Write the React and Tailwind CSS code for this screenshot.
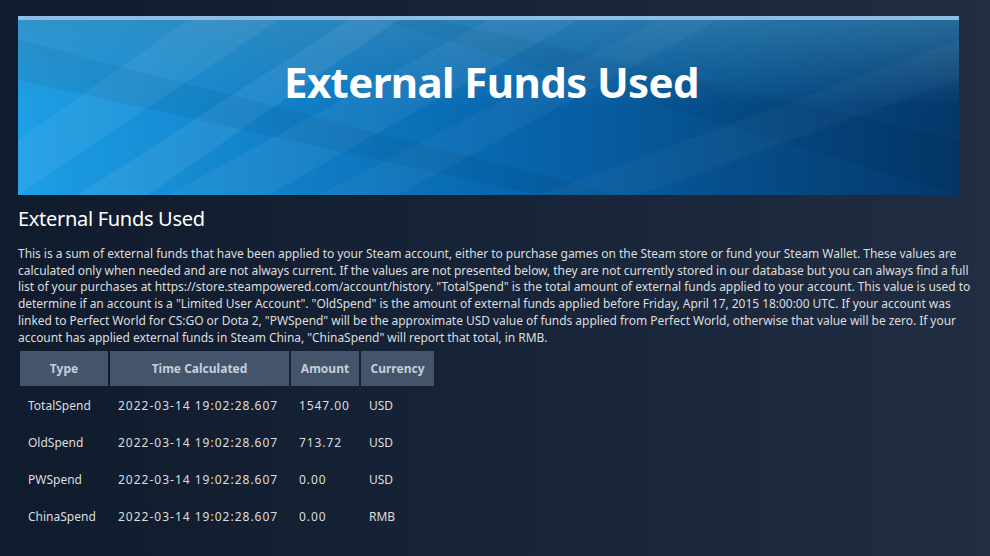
const rows = [
  { type: "TotalSpend", time: "2022-03-14 19:02:28.607", amount: "1547.00", currency: "USD" },
  { type: "OldSpend", time: "2022-03-14 19:02:28.607", amount: "713.72", currency: "USD" },
  { type: "PWSpend", time: "2022-03-14 19:02:28.607", amount: "0.00", currency: "USD" },
  { type: "ChinaSpend", time: "2022-03-14 19:02:28.607", amount: "0.00", currency: "RMB" },
];

function BannerStreaks() {
  return (
    <svg className="absolute inset-0 h-full w-full" viewBox="0 0 941 175" preserveAspectRatio="none">
      <polygon points="0,120 170,0 260,0 0,175" fill="#ffffff" opacity="0.06" />
      <polygon points="60,175 330,0 380,0 130,175" fill="#ffffff" opacity="0.07" />
      <polygon points="150,175 470,0 560,0 250,175" fill="#ffffff" opacity="0.05" />
      <polygon points="300,175 640,0 700,0 380,175" fill="#ffffff" opacity="0.04" />
      <polygon points="0,60 520,175 600,175 0,20" fill="#000000" opacity="0.05" />
      <polygon points="420,0 941,120 941,175 360,0" fill="#000000" opacity="0.04" />
      <polygon points="520,175 941,20 941,60 620,175" fill="#ffffff" opacity="0.03" />
    </svg>
  );
}

export default function App() {
  return (
    <div
      className="min-h-screen w-full bg-gradient-to-r from-[#101b2d] via-[#172337] to-[#212d42] px-[18px] pt-4 pb-6 text-[#dcdedf]"
      style={{ fontFamily: '"Noto Sans", "Open Sans", Arial, sans-serif' }}
    >
      <div className="w-[941px]">
        <div className="h-1 bg-[#8ebce5]" />
        <div className="relative flex h-[175px] items-center justify-center overflow-hidden bg-gradient-to-r from-[#1d9fe6] via-[#0868b0] to-[#04376a]">
          <div className="absolute inset-0 bg-gradient-to-b from-[#3d8dba]/60 via-transparent to-transparent" />
          <BannerStreaks />
          <h1 className="relative -mt-[52px] ml-[6px] text-[42px] font-bold tracking-[-0.6px] text-white">External Funds Used</h1>
        </div>
      </div>

      <h2 className="mt-[10px] text-[20px] leading-7 tracking-[-0.3px] text-white">External Funds Used</h2>

      <p className="mt-[13px] w-[965px] text-[12px] leading-[16.7px] tracking-[-0.04px] text-[#dcdedf]">
        This is a sum of external funds that have been applied to your Steam account, either to purchase games on the
        Steam store or fund your Steam Wallet. These values are calculated only when needed and are not always current.
        If the values are not presented below, they are not currently stored in our database but you can always find a
        full list of your purchases at https://store.steampowered.com/account/history. "TotalSpend" is the total amount
        of external funds applied to your account. This value is used to determine if an account is a "Limited User
        Account". "OldSpend" is the amount of external funds applied before Friday, April 17, 2015 18:00:00 UTC. If your
        account was linked to Perfect World for CS:GO or Dota 2, "PWSpend" will be the approximate USD value of funds
        applied from Perfect World, otherwise that value will be zero. If your account has applied external funds in
        Steam China, "ChinaSpend" will report that total, in RMB.
      </p>

      <table className="mt-[3px] border-separate border-spacing-[2px] text-[12px]">
        <thead>
          <tr className="bg-[#44546a] text-[#c3d0db]">
            <th className="h-[35px] w-[88px] px-2 font-bold">Type</th>
            <th className="h-[35px] w-[179px] px-2 font-bold">Time Calculated</th>
            <th className="h-[35px] w-[68px] px-2 font-bold">Amount</th>
            <th className="h-[35px] w-[73px] px-2 font-bold">Currency</th>
          </tr>
        </thead>
        <tbody>
          {rows.map((r) => (
            <tr key={r.type}>
              <td className="h-[35px] px-2">{r.type}</td>
              <td className="h-[35px] px-2 tracking-[1px]">{r.time}</td>
              <td className="h-[35px] px-2 tracking-[0.9px]">{r.amount}</td>
              <td className="h-[35px] px-2">{r.currency}</td>
            </tr>
          ))}
        </tbody>
      </table>
    </div>
  );
}
